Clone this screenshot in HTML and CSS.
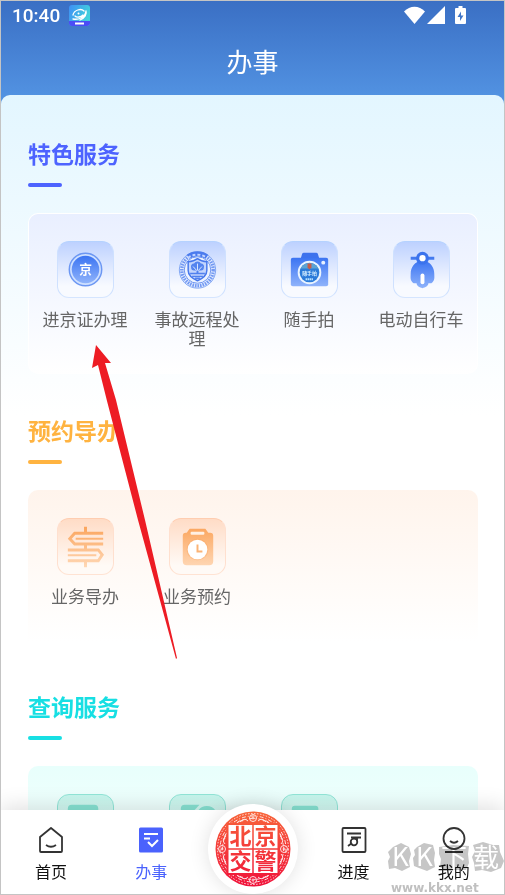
FILE: index.html
```html
<!DOCTYPE html>
<html lang="zh-CN">
  <head>
    <meta charset="UTF-8" />
    <meta name="viewport" content="width=device-width, initial-scale=1" />
    <title>办事</title>
    <link rel="stylesheet" href="styles.css">
  </head>
  <body>
    <div class="phone">
      <header class="top">
        <div class="status-bar">
          <span class="time">10:40</span>
          <svg class="app-badge" viewBox="0 0 21 21">
            <defs>
              <linearGradient id="badge" x1="0" y1="0" x2="1" y2="0.4">
                <stop offset="0" stop-color="#3f8ff5" /><stop offset="1" stop-color="#41d2dc" />
              </linearGradient>
            </defs>
            <rect width="21" height="21" rx="3" fill="url(#badge)" />
            <path d="M0 16h21v2a3 3 0 0 1-3 3H3a3 3 0 0 1-3-3z" fill="#4b4df5" />
            <path d="M4 10c1-5 8-7 11-4M4 14c5 1 12-1 13-8M6 11c2 2 6 1 8-1M17 6c1 3-1 7-6 9" fill="none" stroke="#fff" stroke-width="1.3" stroke-linecap="round" />
            <circle cx="9.500" cy="8.500" r="1" fill="#fff" />
            <path d="M6 18.500h9" stroke="#fff" stroke-width="2" />
          </svg>
          <span class="spacer"></span>
          <svg class="wifi" viewBox="0 0 21 18"><path d="M0 5.500C6-1 15-1 21 5.500L10.500 18z" fill="#fff" /></svg>
          <svg class="signal" viewBox="0 0 18 18"><path d="M18 0v18H0z" fill="#fff" /></svg>
          <svg class="battery" viewBox="0 0 11 18">
            <path d="M3.500 0h4v2H10a1 1 0 0 1 1 1v14a1 1 0 0 1-1 1H1a1 1 0 0 1-1-1V3a1 1 0 0 1 1-1h2.500z" fill="#fff" />
            <path d="M6 5.500 2.500 11H5v4l3.500-5.500H6z" fill="#4076c9" />
          </svg>
        </div>
        <h1 class="title">办事</h1>
      </header>

      <main class="content">
        <section class="group group-blue">
          <h2 class="group-title">特色服务</h2>
          <div class="card">
            <a class="item" href="#">
              <svg class="tile" viewBox="0 0 56 56">
                <defs>
                  <linearGradient id="blueFill" x1="0" y1="0" x2="0" y2="1">
                    <stop offset="0" stop-color="#3b74f2" /><stop offset="1" stop-color="#8fb3fb" />
                  </linearGradient>
                </defs>
                <circle cx="28" cy="28" r="16.500" fill="#cfe0ff" stroke="#6c97f3" stroke-width="1.500" />
                <circle cx="28" cy="28" r="14" fill="url(#blueFill)" />
                <text x="28" y="33" class="tile-char">京</text>
              </svg>
              <span>进京证办理</span>
            </a>
            <a class="item" href="#">
              <svg class="tile" viewBox="0 0 56 56">
                <circle cx="28" cy="28.500" r="18.500" fill="#e4edff" stroke="#82a6f3" stroke-width="1" />
                <circle cx="28" cy="28.500" r="16" fill="none" stroke="#7399f2" stroke-width="3.500" stroke-dasharray="1.600 1" />
                <path d="M18.500 15a16.500 16.500 0 0 1 19 0" fill="none" stroke="#4b7bee" stroke-width="5" />
                <path d="M18.500 16a16 16 0 0 1 19 0" fill="none" stroke="#c3d5ff" stroke-width="2" stroke-dasharray="3 2" />
                <circle cx="28" cy="28.500" r="13.500" fill="#edf3ff" stroke="#6e96f1" />
                <path d="M18.500 20c4 0 7-1 9.500-3 2.500 2 5.500 3 9.500 3v9c0 5-4 8-9.500 10.500C22.500 37 18.500 34 18.500 29z" fill="#c3d5fd" stroke="#4778ec" stroke-width="1.500" />
                <path d="M21.500 26a3 3 0 0 1 3-4 4 4 0 0 1 7 0 3 3 0 0 1 3 4 3 3 0 0 1-3 3h-7a3 3 0 0 1-3-3z" fill="#5484ef" />
                <path d="M23.500 25l4.500 5 4.500-5M28 22v8" fill="none" stroke="#dbe7ff" stroke-width="1" />
                <path d="M28 29v3" stroke="#5181ee" stroke-width="2" />
                <path d="M20.500 32h15M22.500 35h11M25.500 37h5" stroke="#5181ee" stroke-width="1.500" />
              </svg>
              <span>事故远程处理</span>
            </a>
            <a class="item" href="#">
              <svg class="tile" viewBox="0 0 56 56">
                <path d="M19 17l1.500-5a2 2 0 0 1 2-1h12a2 2 0 0 1 2 1l1.500 5z" fill="#3d72ed" />
                <rect x="9" y="16" width="38" height="29" rx="2" fill="url(#blueFill)" />
                <circle cx="28" cy="31" r="12" fill="#eaf4ff" />
                <circle cx="28" cy="31" r="10" fill="#2b7bd9" />
                <path d="M19 27a10 10 0 0 1 18 0z" fill="#5ca3d4" />
                <path d="M26 22h4v4l-2 2-2-2z" fill="#c65c4a" />
                <text x="28" y="34" class="lens-text">随手拍</text>
                <path d="M24 38h8" stroke="#b8e2ff" stroke-width="2" stroke-dasharray="1.500 .5" />
                <circle cx="42" cy="21" r="2" fill="#e7f0ff" />
              </svg>
              <span>随手拍</span>
            </a>
            <a class="item" href="#">
              <svg class="tile" viewBox="0 0 56 56">
                <path d="M17 16.500h24" stroke="#437aef" stroke-width="3" />
                <path d="M29 19c8 0 12 7 12 13 0 4 1 7-3 10h-3c0 3-3 4-6 5-3-1-6-2-6-5h-3c-4-3-3-6-3-10 0-6 4-13 12-13z" fill="url(#blueFill)" />
                <circle cx="29" cy="16.500" r="6.500" fill="#3b73ed" />
                <circle cx="29" cy="16.500" r="3.200" fill="#fff" />
                <rect x="27" y="32" width="4" height="11" rx="2" fill="#fff" />
              </svg>
              <span>电动自行车</span>
            </a>
          </div>
        </section>

        <section class="group group-orange">
          <h2 class="group-title">预约导办</h2>
          <div class="card">
            <a class="item" href="#">
              <svg class="tile" viewBox="0 0 56 56">
                <defs>
                  <linearGradient id="orangeFill" gradientUnits="userSpaceOnUse" x1="0" y1="8" x2="0" y2="50">
                    <stop offset="0" stop-color="#fba55d" /><stop offset="1" stop-color="#ffd9b8" />
                  </linearGradient>
                </defs>
                <g fill="none" stroke="url(#orangeFill)" stroke-width="3">
                  <path d="M28 8v6M28 26v5M28 43v6" />
                  <path d="M46 14.500H17l-5 5.500 5 5.500h29" />
                  <path d="M18 20h28" stroke-width="2" />
                  <path d="M10 31.500h31l4 5-4 6H10" />
                  <path d="M10 37h29" stroke-width="2" />
                </g>
              </svg>
              <span>业务导办</span>
            </a>
            <a class="item" href="#">
              <svg class="tile" viewBox="0 0 56 56">
                <path d="M20 10h16l3 4h2a3 3 0 0 1 3 3v26a4 4 0 0 1-4 4H17a4 4 0 0 1-4-4V17a3 3 0 0 1 3-3h1z" fill="url(#orangeFill)" />
                <rect x="21" y="13" width="14" height="3" rx="1" fill="#fff0e3" />
                <circle cx="28" cy="31" r="11" fill="#f9a25e" opacity=".35" />
                <circle cx="28" cy="31" r="10" fill="#fff" />
                <path d="M28 26v7h5" fill="none" stroke="#fbb375" stroke-width="2" />
              </svg>
              <span>业务预约</span>
            </a>
          </div>
        </section>

        <section class="group group-teal">
          <h2 class="group-title">查询服务</h2>
          <div class="card">
            <a class="item" href="#" aria-label="查询">
              <svg class="tile" viewBox="0 0 56 56"><rect x="10" y="10" width="31" height="34" rx="4" fill="#86e2d2" /></svg>
            </a>
            <a class="item" href="#" aria-label="查询">
              <svg class="tile" viewBox="0 0 56 56">
                <path d="M15 10h15L17 24h-6V14a4 4 0 0 1 4-4z" fill="#86e2d2" />
                <path d="M30 19a8 8 0 0 1 15 0" fill="none" stroke="#86e2d2" stroke-width="5" />
              </svg>
            </a>
            <a class="item" href="#" aria-label="查询">
              <svg class="tile" viewBox="0 0 56 56"><rect x="10" y="11" width="27" height="34" rx="3" fill="#86e2d2" /></svg>
            </a>
          </div>
        </section>
      </main>

      <nav class="tabs">
        <a class="tab" href="#">
          <svg class="tab-icon" viewBox="0 0 26 28">
            <path d="M2 11 13 2l11 9v14a1 1 0 0 1-1 1H3a1 1 0 0 1-1-1z" fill="none" stroke="#333" stroke-width="1.800" stroke-linejoin="round" />
            <path d="M8 19q5 3.500 10 0" fill="none" stroke="#333" stroke-width="1.800" />
          </svg>
          <span>首页</span>
        </a>
        <a class="tab tab-active" href="#">
          <svg class="tab-icon" viewBox="0 0 26 28">
            <rect x="1" y="1.500" width="24" height="25" rx="1.500" fill="#4a62fd" />
            <path d="M6 8h14M6 12.500h6M10 16l4 4 6-6" fill="none" stroke="#fff" stroke-width="2" />
          </svg>
          <span>办事</span>
        </a>
        <a class="tab tab-center" href="#" aria-label="北京交警">
          <svg class="seal" viewBox="0 0 76 76">
            <defs>
              <linearGradient id="seal" gradientUnits="userSpaceOnUse" x1="0" y1="0" x2="0" y2="76">
                <stop offset="0" stop-color="#f8663a" /><stop offset="1" stop-color="#f0103a" />
              </linearGradient>
            </defs>
            <circle cx="38" cy="38" r="37.500" fill="url(#seal)" />
            <g fill="none" stroke="#fff" stroke-width="1" opacity=".85">
              <circle cx="38" cy="38" r="35.500" stroke-dasharray="1.500 1.500" />
              <circle cx="38" cy="38" r="33" stroke-dasharray="4 2 1 2" />
              <circle cx="38" cy="38" r="30.500" stroke-dasharray="2 3 3 1" />
              <g id="flower">
                <circle cx="38" cy="7" r="3.500" /><circle cx="38" cy="7" r="1" />
                <path d="M25 11q4-5 8-1M51 11q-4-5-8-1" />
              </g>
              <use href="#flower" transform="rotate(45 38 38)" />
              <use href="#flower" transform="rotate(90 38 38)" />
              <use href="#flower" transform="rotate(135 38 38)" />
              <use href="#flower" transform="rotate(180 38 38)" />
              <use href="#flower" transform="rotate(225 38 38)" />
              <use href="#flower" transform="rotate(270 38 38)" />
              <use href="#flower" transform="rotate(315 38 38)" />
            </g>
            <rect x="12.500" y="13" width="51" height="50" fill="#fff" stroke="url(#seal)" stroke-width="2" />
            <path d="M38 13v50M13 38h50" stroke="url(#seal)" stroke-width="1.500" />
            <g class="seal-text" fill="url(#seal)">
              <text x="25.500" y="33">北</text><text x="50.500" y="33">京</text>
              <text x="25.500" y="58">交</text><text x="50.500" y="58">警</text>
            </g>
          </svg>
        </a>
        <a class="tab" href="#">
          <svg class="tab-icon" viewBox="0 0 26 28">
            <g fill="none" stroke="#333" stroke-width="1.800">
              <rect x="1.500" y="2" width="23" height="24" rx="1" />
              <path d="M6 7.500h14M10 11.500h10M16 11.500v3M7 20l4-3" />
              <circle cx="13" cy="16" r="3.300" />
            </g>
          </svg>
          <span>进度</span>
        </a>
        <a class="tab" href="#">
          <svg class="tab-icon" viewBox="0 0 26 28">
            <g fill="none" stroke="#333" stroke-width="1.800">
              <circle cx="13" cy="12.500" r="10.500" />
              <path d="M9 15q4 3.500 8 0M4 26h18" />
            </g>
          </svg>
          <span>我的</span>
        </a>
      </nav>

      <svg class="watermark" viewBox="0 0 118 64" aria-hidden="true">
        <g fill="#c6c6c6">
          <path d="M6 16 14 12l8 4 2 7-2 7 1 6-8 4-7-3-6 1-1-8 2-4-2-5z" />
          <path d="M30 16 37 12l9 2 2 8-1 7 1 7-8 4-8-3-5-2-1-8 2-3-1-5z" />
          <path d="M52 16 66 14l16 1-1 8 1 9-3 7H58l-5-3 1-8-2-5z" />
          <path d="M86 14 96 11l10 3 6 0 1 7 4 9-3 7-10 4-9-2-7 1-1-8-2-6 3-6z" />
        </g>
        <g class="wm-name"><text x="5" y="35">K</text><text x="29" y="35">K</text><text x="54" y="36">下</text><text x="86" y="36">载</text></g>
        <text x="4" y="61" class="wm-url">www.kkx.net</text>
      </svg>

      <!-- pointer to the first service -->
      <svg class="arrow" viewBox="0 0 86 314" aria-hidden="true">
        <path d="M5 0 20 18 14 18 25 55 54 175 86 313 85 314 47 175 16 56 7 20 1 23z" fill="#ed1c24" />
      </svg>
    </div>
  </body>
</html>
```
FILE: styles.css
```css
* {
  box-sizing: border-box;
}

body {
  margin: 0;
  background: #fff;
  color: #666;
  font-family: "Noto Sans CJK SC", sans-serif;
}

a {
  color: inherit;
  text-decoration: none;
}

.phone {
  position: relative;
  display: flex;
  flex-direction: column;
  height: 100vh;
  border: 1px solid #c4c4c4;
  overflow: hidden;
  background: linear-gradient(#3a6fc4, #5495e4 104px, #fff 104px);
}

/* header */
.top {
  flex: none;
  color: #fff;
}

.status-bar {
  display: flex;
  align-items: center;
  height: 28px;
  padding: 0 38px 0 11px;
}

.time {
  font-family: Roboto, sans-serif;
  font-size: 19px;
  font-weight: 500;
}

.app-badge {
  width: 21px;
  height: 21px;
  margin-left: 9px;
}

.spacer {
  flex: 1;
}

.wifi {
  width: 21px;
  height: 18px;
}

.signal {
  width: 18px;
  height: 18px;
  margin-left: 2px;
}

.battery {
  width: 11px;
  height: 18px;
  margin-left: 10px;
}

.title {
  margin: 0;
  padding: 13px 0 15px;
  font-size: 26px;
  font-weight: 400;
  line-height: 38px;
  text-align: center;
}

/* service groups */
.content {
  flex: 1;
  min-height: 0;
  overflow: hidden;
  padding: 42px 26px 0 27px;
  border-radius: 9px 9px 0 0;
  background: linear-gradient(#e3f6ff, #fff 320px);
}

.group {
  margin-bottom: 40px;
}

.group-title {
  margin: 0 0 26px;
  font-size: 23px;
  font-weight: 700;
  line-height: 32px;
}

.group-title::after {
  content: "";
  display: block;
  width: 34px;
  height: 4px;
  margin-top: 14px;
  border-radius: 2px;
  background: currentColor;
}

.card {
  display: grid;
  grid-template-columns: repeat(4, 1fr);
  align-items: start;
  min-height: 160px;
  padding: 28px 1px 0;
  border-radius: 10px;
}

.item {
  display: flex;
  flex-direction: column;
  align-items: center;
  gap: 11px;
  padding: 0 8px;
  font-size: 17px;
  line-height: 19px;
  text-align: center;
}

.tile {
  width: 57px;
  height: 57px;
  border: 1px solid;
  border-radius: 12px;
}

.group-blue .group-title {
  color: #4d63ff;
}

.group-blue .card {
  min-height: 161px;
  padding: 27px 0 0;
  border: 1px solid #fff;
  border-bottom: 0;
  background: linear-gradient(#e9efff, #fff);
}

.group-blue .tile {
  border-color: #b5d2ff #cfe1ff #d5e5ff;
  background: linear-gradient(#bdd1ff, #f8faff 80%);
}

.group-orange .group-title {
  color: #ffb340;
}

.group-orange .card {
  background: linear-gradient(#fff4ec, #fff 95%);
}

.group-orange .tile {
  border-color: #ffcdb0 #ffe0cf #ffe3d3;
  background: linear-gradient(#ffdcc6, #fffaf6 85%);
}

.group-teal .group-title {
  color: #17dfe3;
}

.group-teal .card {
  background: linear-gradient(#e8fffc, #fff);
}

.group-teal .tile {
  border-color: #92e6d8;
  background: linear-gradient(#c5f5ec, #f5fffd);
}

.tile-char {
  fill: #fff;
  font-size: 13px;
  font-weight: 700;
  text-anchor: middle;
}

.lens-text {
  fill: #d8f0ff;
  font-size: 5px;
  font-weight: 700;
  text-anchor: middle;
}

/* bottom navigation */
.tabs {
  position: relative;
  display: flex;
  flex: none;
  height: 84px;
  background: #fff;
  box-shadow: 0 -4px 20px rgba(0, 0, 0, 0.12);
}

.tab {
  display: flex;
  flex: 1;
  flex-direction: column;
  align-items: center;
  gap: 5px;
  padding-top: 16px;
  color: #111;
  font-size: 16px;
  line-height: 24px;
}

.tab-active {
  color: #4a62fd;
}

.tab-icon {
  width: 26px;
  height: 28px;
}

.tab-center {
  flex: none;
  justify-content: center;
  width: 90px;
  height: 90px;
  margin: -6px 6px 0;
  padding: 0;
  border-radius: 50%;
  background: #fff;
  box-shadow: 0 0 20px rgba(0, 0, 0, 0.12);
}

.seal {
  width: 76px;
  height: 76px;
}

.seal-text {
  font-size: 22px;
  font-weight: 700;
  text-anchor: middle;
}

/* overlays */
.watermark {
  position: absolute;
  right: -1px;
  bottom: -1px;
  width: 118px;
  height: 64px;
  mix-blend-mode: multiply;
  pointer-events: none;
}

.wm-name {
  fill: #fff;
  font-size: 26px;
}

.wm-url {
  fill: #c0c0c0;
  font-family: "DejaVu Sans", sans-serif;
  font-size: 12px;
  font-weight: 700;
}

.arrow {
  position: absolute;
  top: 344px;
  left: 90px;
  width: 86px;
  height: 314px;
  pointer-events: none;
}
```
